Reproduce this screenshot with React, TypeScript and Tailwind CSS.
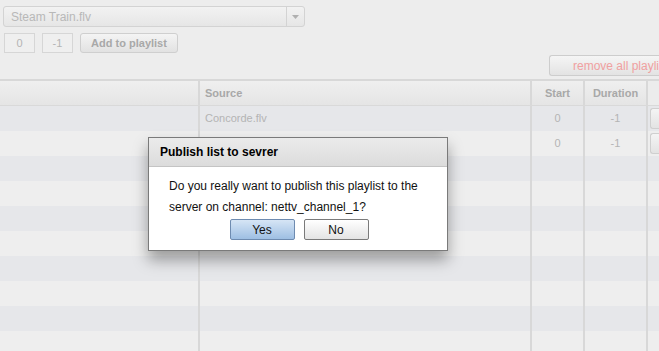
const rows = [
  { source: 'Concorde.flv', start: '0', duration: '-1', btn: true },
  { source: '', start: '0', duration: '-1', btn: true },
  { source: '', start: '', duration: '', btn: false },
  { source: '', start: '', duration: '', btn: false },
  { source: '', start: '', duration: '', btn: false },
  { source: '', start: '', duration: '', btn: false },
  { source: '', start: '', duration: '', btn: false },
  { source: '', start: '', duration: '', btn: false },
  { source: '', start: '', duration: '', btn: false },
  { source: '', start: '', duration: '', btn: false },
];

export default function App() {
  return (
    <div className="relative h-[351px] w-[659px] overflow-hidden bg-[#ededed] font-['Liberation_Sans',Arial,sans-serif] text-[11px] text-[#b4b4b4]">
      {/* Toolbar (disabled while the dialog is open) */}
      <div className="px-[3px] pt-[6px]">
        <div className="flex h-[21px] w-[302px] rounded-[3px] border border-[#d3d3d3] bg-gradient-to-b from-[#f2f2f2] to-[#e6e6e6]">
          <div className="flex flex-1 items-center pl-[7px] text-[12px] text-[#b8b8b8]">Steam Train.flv</div>
          <div className="flex w-[18px] items-center justify-center border-l border-[#d3d3d3]">
            <svg width="7" height="4" viewBox="0 0 7 4">
              <path d="M0 0h7L3.5 4z" fill="#b0b0b0" />
            </svg>
          </div>
        </div>
        <div className="mt-[6px] flex items-center">
          <div className="ml-px flex h-[20px] w-[31px] items-center justify-center border border-[#d6d6d6] bg-[#efefef]">0</div>
          <div className="ml-[7px] flex h-[20px] w-[31px] items-center justify-center border border-[#d6d6d6] bg-[#efefef]">-1</div>
          <div className="ml-[7px] flex h-[20px] w-[98px] items-center justify-center rounded-[3px] border border-[#cfcfcf] bg-gradient-to-b from-[#f4f4f4] to-[#e2e2e2] font-bold text-[#a8a8a8]">
            Add to playlist
          </div>
        </div>
      </div>

      <div className="mt-[2px] flex justify-end">
        <div className="flex h-[21px] w-[110px] items-center rounded-l-[3px] border border-r-0 border-[#cdcdcd] bg-gradient-to-b from-[#f5f5f5] to-[#e3e3e3] pl-[23px] text-[12px] whitespace-nowrap text-[#f0a0a0]">
          remove all playlist
        </div>
      </div>

      {/* Playlist table */}
      <div className="mt-[3px] border-t-2 border-[#d8d8d8]">
        <div className="flex h-[25px] border-b border-[#d9d9d9] bg-gradient-to-b from-[#efefef] to-[#e5e5e5] font-bold text-[#a8a8a8]">
          <div className="w-[200px] border-r-2 border-[#d8d8d8]" />
          <div className="flex w-[332px] items-center border-r-2 border-[#d8d8d8] pl-[5px]">Source</div>
          <div className="flex w-[53px] items-center justify-center border-r-2 border-[#d8d8d8]">Start</div>
          <div className="flex w-[63px] items-center justify-center border-r-2 border-[#d8d8d8]">Duration</div>
          <div className="flex-1 bg-[#ececec]" />
        </div>
        {rows.map((r, i) => (
          <div key={i} className={`flex h-[25px] ${i % 2 === 0 ? 'bg-[#e6e7ea]' : 'bg-[#eeeeee]'}`}>
            <div className="w-[200px] border-r-2 border-[#d8d8d8]" />
            <div className="flex w-[332px] items-center border-r-2 border-[#d8d8d8] pl-[5px]">{r.source}</div>
            <div className="flex w-[53px] items-center justify-center border-r-2 border-[#d8d8d8]">{r.start}</div>
            <div className="flex w-[63px] items-center justify-center border-r-2 border-[#d8d8d8]">{r.duration}</div>
            <div className="flex flex-1 items-center pl-[2px]">
              {r.btn && (
                <div className="h-[21px] flex-1 rounded-l-[3px] border border-r-0 border-[#cfcfcf] bg-gradient-to-b from-[#f4f4f4] to-[#e3e3e3]" />
              )}
            </div>
          </div>
        ))}
      </div>

      {/* Confirm dialog */}
      <div className="absolute top-[137px] left-[148px] w-[300px] border border-[#7a7a7a] bg-white shadow-[0_9px_14px_rgba(0,0,0,0.35)]">
        <div className="flex h-[29px] items-center border-b border-[#c4c4c4] bg-gradient-to-b from-[#ebebeb] to-[#dcdcdc] pl-[11px] text-[12px] font-bold text-black">
          Publish list to sevrer
        </div>
        <div className="px-[20px] pt-[9px] text-[12px] leading-[21px] text-[#111]">
          <p>Do you really want to publish this playlist to the</p>
          <p>server on channel: nettv_channel_1?</p>
        </div>
        <div className="flex justify-center gap-[9px] pt-[1px] pb-[10px] pl-[2px]">
          <button className="h-[21px] w-[65px] rounded-[2px] border border-[#6e8bb0] bg-gradient-to-b from-[#d6e5f5] to-[#9ebfe3] text-[12px] text-[#111]">
            Yes
          </button>
          <button className="h-[21px] w-[65px] rounded-[2px] border border-[#7a7a7a] bg-gradient-to-b from-[#ffffff] to-[#e4e4e4] text-[12px] text-[#111]">
            No
          </button>
        </div>
      </div>
    </div>
  );
}
